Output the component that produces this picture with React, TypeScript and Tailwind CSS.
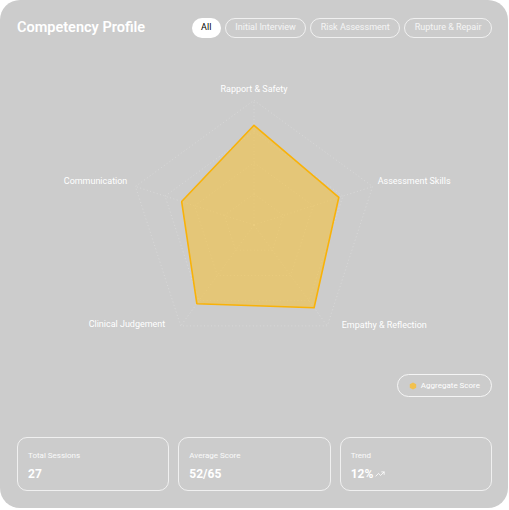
import { TrendingUp } from 'lucide-react'

const filters = ['All', 'Initial Interview', 'Risk Assessment', 'Rupture & Repair']

// radar centre/size in svg coords (page minus 17, 38)
const CX = 237
const CY = 187.5
const R = 125

const axes = [
  { label: 'Rapport & Safety', value: 0.8 },
  { label: 'Assessment Skills', value: 0.715 },
  { label: 'Empathy & Reflection', value: 0.82 },
  { label: 'Clinical Judgement', value: 0.78 },
  { label: 'Communication', value: 0.61 },
]

function point(i: number, r: number) {
  const a = (-90 + i * 72) * (Math.PI / 180)
  return [CX + Math.cos(a) * r, CY + Math.sin(a) * r]
}

function ring(scale: number) {
  return axes.map((_, i) => point(i, R * scale).join(',')).join(' ')
}

function Radar() {
  const data = axes.map((a, i) => point(i, R * a.value).join(',')).join(' ')
  return (
    <svg width="475" height="337" viewBox="0 0 475 337" className="block">
      <g stroke="#ffffff" strokeOpacity="0.3" fill="none" strokeWidth="0.8" strokeDasharray="1 2.5">
        {[0.25, 0.5, 0.75, 1].map(s => (
          <polygon key={s} points={ring(s)} />
        ))}
        {axes.map((_, i) => {
          const [x, y] = point(i, R)
          return <line key={i} x1={CX} y1={CY} x2={x} y2={y} />
        })}
      </g>
      <polygon points={data} fill="#fbbf24" fillOpacity="0.5" stroke="#f9b208" strokeWidth="1.6" strokeLinejoin="round" />
      <g fill="#ffffff" fontSize="9" fontFamily="Roboto, 'Liberation Sans', sans-serif">
        <text x="237" y="54" textAnchor="middle">Rapport & Safety</text>
        <text x="361" y="146">Assessment Skills</text>
        <text x="325" y="291">Empathy & Reflection</text>
        <text x="148" y="290" textAnchor="end">Clinical Judgement</text>
        <text x="110" y="146" textAnchor="end">Communication</text>
      </g>
    </svg>
  )
}

function Stat({ label, value, trend }: { label: string; value: string; trend?: boolean }) {
  return (
    <div className="border border-white/70 rounded-[10px] px-[10px] pt-[13px]">
      <p className="text-[8px] leading-[10px] text-white/90">{label}</p>
      <p className="mt-[6px] flex items-center gap-[2px] text-[12px] leading-[14px] font-bold text-white">
        {value}
        {trend && <TrendingUp size={10} strokeWidth={2} className="text-white" />}
      </p>
    </div>
  )
}

export default function App() {
  return (
    <div className="w-[509px] h-[510px] bg-white" style={{ fontFamily: "Roboto, 'Liberation Sans', sans-serif" }}>
      <div className="w-[508px] h-[508px] bg-[#cccccc] rounded-[20px] pt-[18px] px-[17px] pr-[16px] pb-[17px] flex flex-col">
        <div className="flex items-center justify-between h-[20px]">
          <h1 className="text-[14.5px] font-semibold text-white">Competency Profile</h1>
          <div className="flex gap-[4px]">
            {filters.map((f, i) => (
              <span
                key={f}
                className={
                  i === 0
                    ? 'h-[20px] px-[9.5px] rounded-full bg-white text-black text-[9px] flex items-center'
                    : 'h-[20px] px-[9.5px] rounded-full border border-white/70 text-white/80 text-[9px] flex items-center'
                }
              >
                {f}
              </span>
            ))}
          </div>
        </div>

        <Radar />

        <div className="flex justify-end">
          <div className="h-[23px] px-[11px] rounded-full border border-white/80 flex items-center gap-[4px] text-white text-[8px]">
            <svg width="8" height="8" viewBox="0 0 10 10">
              <polygon points="5,0.5 9,2.8 9,7.2 5,9.5 1,7.2 1,2.8" fill="#f2c14e" />
            </svg>
            Aggregate Score
          </div>
        </div>

        <div className="mt-[40px] grid grid-cols-3 gap-[9px] h-[54px]">
          <Stat label="Total Sessions" value="27" />
          <Stat label="Average Score" value="52/65" />
          <Stat label="Trend" value="12%" trend />
        </div>
      </div>
    </div>
  )
}
